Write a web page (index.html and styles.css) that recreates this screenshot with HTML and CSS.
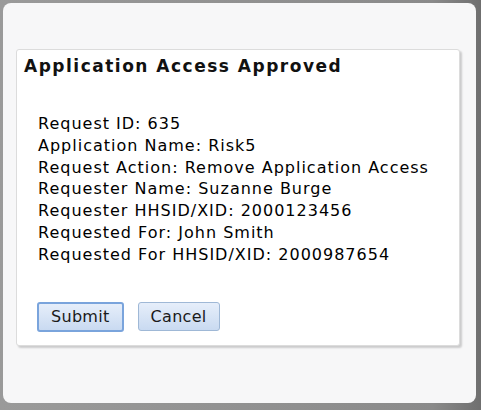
FILE: index.html
```html
<!DOCTYPE html>
<html>
<head>
<meta charset="utf-8">
<link rel="stylesheet" href="styles.css">
</head>
<body>
<div class="dialog">
  <div class="card">
    <h1 class="title">Application Access Approved</h1>
    <div class="details">
      <div>Request ID: 635</div>
      <div>Application Name: Risk5</div>
      <div>Request Action: Remove Application Access</div>
      <div>Requester Name: Suzanne Burge</div>
      <div>Requester HHSID/XID: 2000123456</div>
      <div>Requested For: John Smith</div>
      <div>Requested For HHSID/XID: 2000987654</div>
    </div>
    <div class="actions">
      <button class="btn btn-primary">Submit</button>
      <button class="btn">Cancel</button>
    </div>
  </div>
</div>
</body>
</html>
```
FILE: styles.css
```css
html, body {
  margin: 0;
  padding: 0;
}
body {
  width: 481px;
  height: 410px;
  background: linear-gradient(to right, #9a9a9a, #8a8a8a 90%, #6f6f6f);
  font-family: "DejaVu Sans", Verdana, sans-serif;
  padding: 3px 5px 7px 3px;
  box-sizing: border-box;
}
.dialog {
  height: 100%;
  background: #f7f7f8;
  border-radius: 8px;
  padding: 46px 16px 0 13px;
  box-sizing: border-box;
}
.card {
  background: #fff;
  border: 1px solid #dcdcdc;
  border-radius: 3px;
  box-shadow: 2px 2px 2px rgba(0,0,0,0.18);
  height: 297px;
  box-sizing: border-box;
  padding: 0 0 0 7px;
}
.title {
  margin: 0;
  padding-top: 5px;
  font-size: 17px;
  letter-spacing: 1.5px;
  font-weight: bold;
  color: #111;
  line-height: 22px;
}
.details {
  margin-top: 36px;
  padding-left: 14px;
  font-size: 16px;
  letter-spacing: 1px;
  line-height: 21.8px;
  color: #000;
}
.actions {
  display: flex;
  gap: 14px;
  margin-top: 36px;
  padding-left: 13px;
}
.btn {
  font-family: "DejaVu Sans", Verdana, sans-serif;
  font-size: 16px;
  letter-spacing: 0.3px;
  color: #1a1a1a;
  height: 29px;
  padding: 0 12px;
  border: 1px solid #9fb8d6;
  border-radius: 3px;
  background: linear-gradient(#e6eefa, #c9daf1);
}
.btn-primary {
  border: 2px solid #7aa4dc;
  height: 30px;
}
```
